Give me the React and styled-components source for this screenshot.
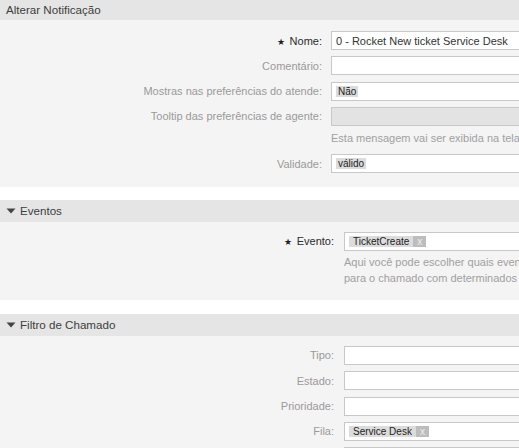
import React from "react";
import styled, { createGlobalStyle } from "styled-components";

const Global = createGlobalStyle`
  html, body { margin: 0; padding: 0; background: #fff; overflow: hidden; }
  body { font-family: "Liberation Sans", Arial, sans-serif; font-size: 11px; color: #333; }
`;

const Page = styled.div`
  width: 519px;
  overflow: hidden;
`;

const Section = styled.section`
  margin-bottom: ${(p) => p.$gap}px;
`;

const Header = styled.div`
  height: ${(p) => p.$h}px;
  line-height: ${(p) => p.$lh}px;
  background: #e5e5e5;
  padding-left: 6px;
  display: flex;
  align-items: center;
  gap: 4px;
  font-size: 11.6px;
  color: #3d3d3d;
`;

const Body = styled.div`
  background: #f4f4f4;
  padding: ${(p) => p.$pad};
  display: flex;
  flex-direction: column;
  gap: 6.3px;
`;

const Row = styled.div`
  display: grid;
  grid-template-columns: ${(p) => p.$label}px 330px;
  column-gap: ${(p) => p.$colgap}px;
  align-items: center;
`;

const Label = styled.label`
  text-align: right;
  font-size: 11px;
  color: ${(p) => (p.$required ? "#2b2b2b" : "#9a9a9a")};
  white-space: nowrap;
`;

const Star = styled.span`
  font-size: 9px;
  margin-right: 5px;
  color: #222;
`;

const Input = styled.div`
  box-sizing: border-box;
  height: 19px;
  border: 1px solid #c8c8c8;
  background: ${(p) => (p.$disabled ? "#e3e3e3" : "#fff")};
  display: flex;
  align-items: center;
  padding: 0 4px;
  font-size: 11px;
  color: #333;
  white-space: nowrap;
`;

const Tag = styled.span`
  display: inline-flex;
  align-items: stretch;
  height: 11px;
  line-height: 11px;
  background: #dcdcdc;
  font-size: 10px;
  color: #222;
`;

const TagText = styled.span`
  padding: 0 ${(p) => (p.$x ? 4 : 2)}px;
`;

const TagX = styled.span`
  width: 13px;
  background: #bdbdbd;
  color: #eee;
  text-align: center;
  font-size: 10px;
`;

const Help = styled.div`
  font-size: 11px;
  line-height: 16px;
  color: #a0a0a0;
  white-space: nowrap;
  margin: ${(p) => p.$m};
`;

const Triangle = () => (
  <svg width="10" height="6" viewBox="0 0 10 6">
    <path d="M0.5 0.5 L9.5 0.5 L5 5.5 Z" fill="#444" />
  </svg>
);

const Field = ({ label, required, labelW, colgap, children, disabled }) => (
  <Row $label={labelW} $colgap={colgap}>
    <Label $required={required}>
      {required && <Star>★</Star>}
      {label}
    </Label>
    <Input $disabled={disabled}>{children}</Input>
  </Row>
);

const HelpRow = ({ labelW, colgap, children, m }) => (
  <Row $label={labelW} $colgap={colgap}>
    <span />
    <Help $m={m}>{children}</Help>
  </Row>
);

export default function App() {
  const s1 = { labelW: 322, colgap: 9 };
  const s2 = { labelW: 334, colgap: 10 };
  return (
    <Page>
      <Global />
      <Section $gap={13}>
        <Header $h={20} $lh={20}>Alterar Notificação</Header>
        <Body $pad="11px 0 13.5px 0">
          <Field {...s1} label="Nome:" required>
            0 - Rocket New ticket Service Desk
          </Field>
          <Field {...s1} label="Comentário:" />
          <Field {...s1} label="Mostras nas preferências do atende:">
            <Tag>
              <TagText>Não</TagText>
            </Tag>
          </Field>
          <Field {...s1} label="Tooltip das preferências de agente:" disabled />
          <HelpRow {...s1} m="-2px 0 2px 0">
            Esta mensagem vai ser exibida na tela de preferências do agente
          </HelpRow>
          <Field {...s1} label="Validade:">
            <Tag>
              <TagText>válido</TagText>
            </Tag>
          </Field>
        </Body>
      </Section>

      <Section $gap={14}>
        <Header $h={22} $lh={22}>
          <Triangle />
          Eventos
        </Header>
        <Body $pad="10px 0 13.7px 0">
          <Field {...s2} label="Evento:" required>
            <Tag>
              <TagText $x>TicketCreate</TagText>
              <TagX>x</TagX>
            </Tag>
          </Field>
          <HelpRow {...s2} m="-3px 0 0 0">
            Aqui você pode escolher quais eventos irão disparar essa notificação.
            <br />
            para o chamado com determinados critérios.
          </HelpRow>
        </Body>
      </Section>

      <Section $gap={0}>
        <Header $h={22} $lh={22}>
          <Triangle />
          Filtro de Chamado
        </Header>
        <Body $pad="10px 0 14px 0">
          <Field {...s2} label="Tipo:" />
          <Field {...s2} label="Estado:" />
          <Field {...s2} label="Prioridade:" />
          <Field {...s2} label="Fila:">
            <Tag>
              <TagText $x>Service Desk</TagText>
              <TagX>x</TagX>
            </Tag>
          </Field>
          <Field {...s2} label="Bloquear:" />
        </Body>
      </Section>
    </Page>
  );
}
